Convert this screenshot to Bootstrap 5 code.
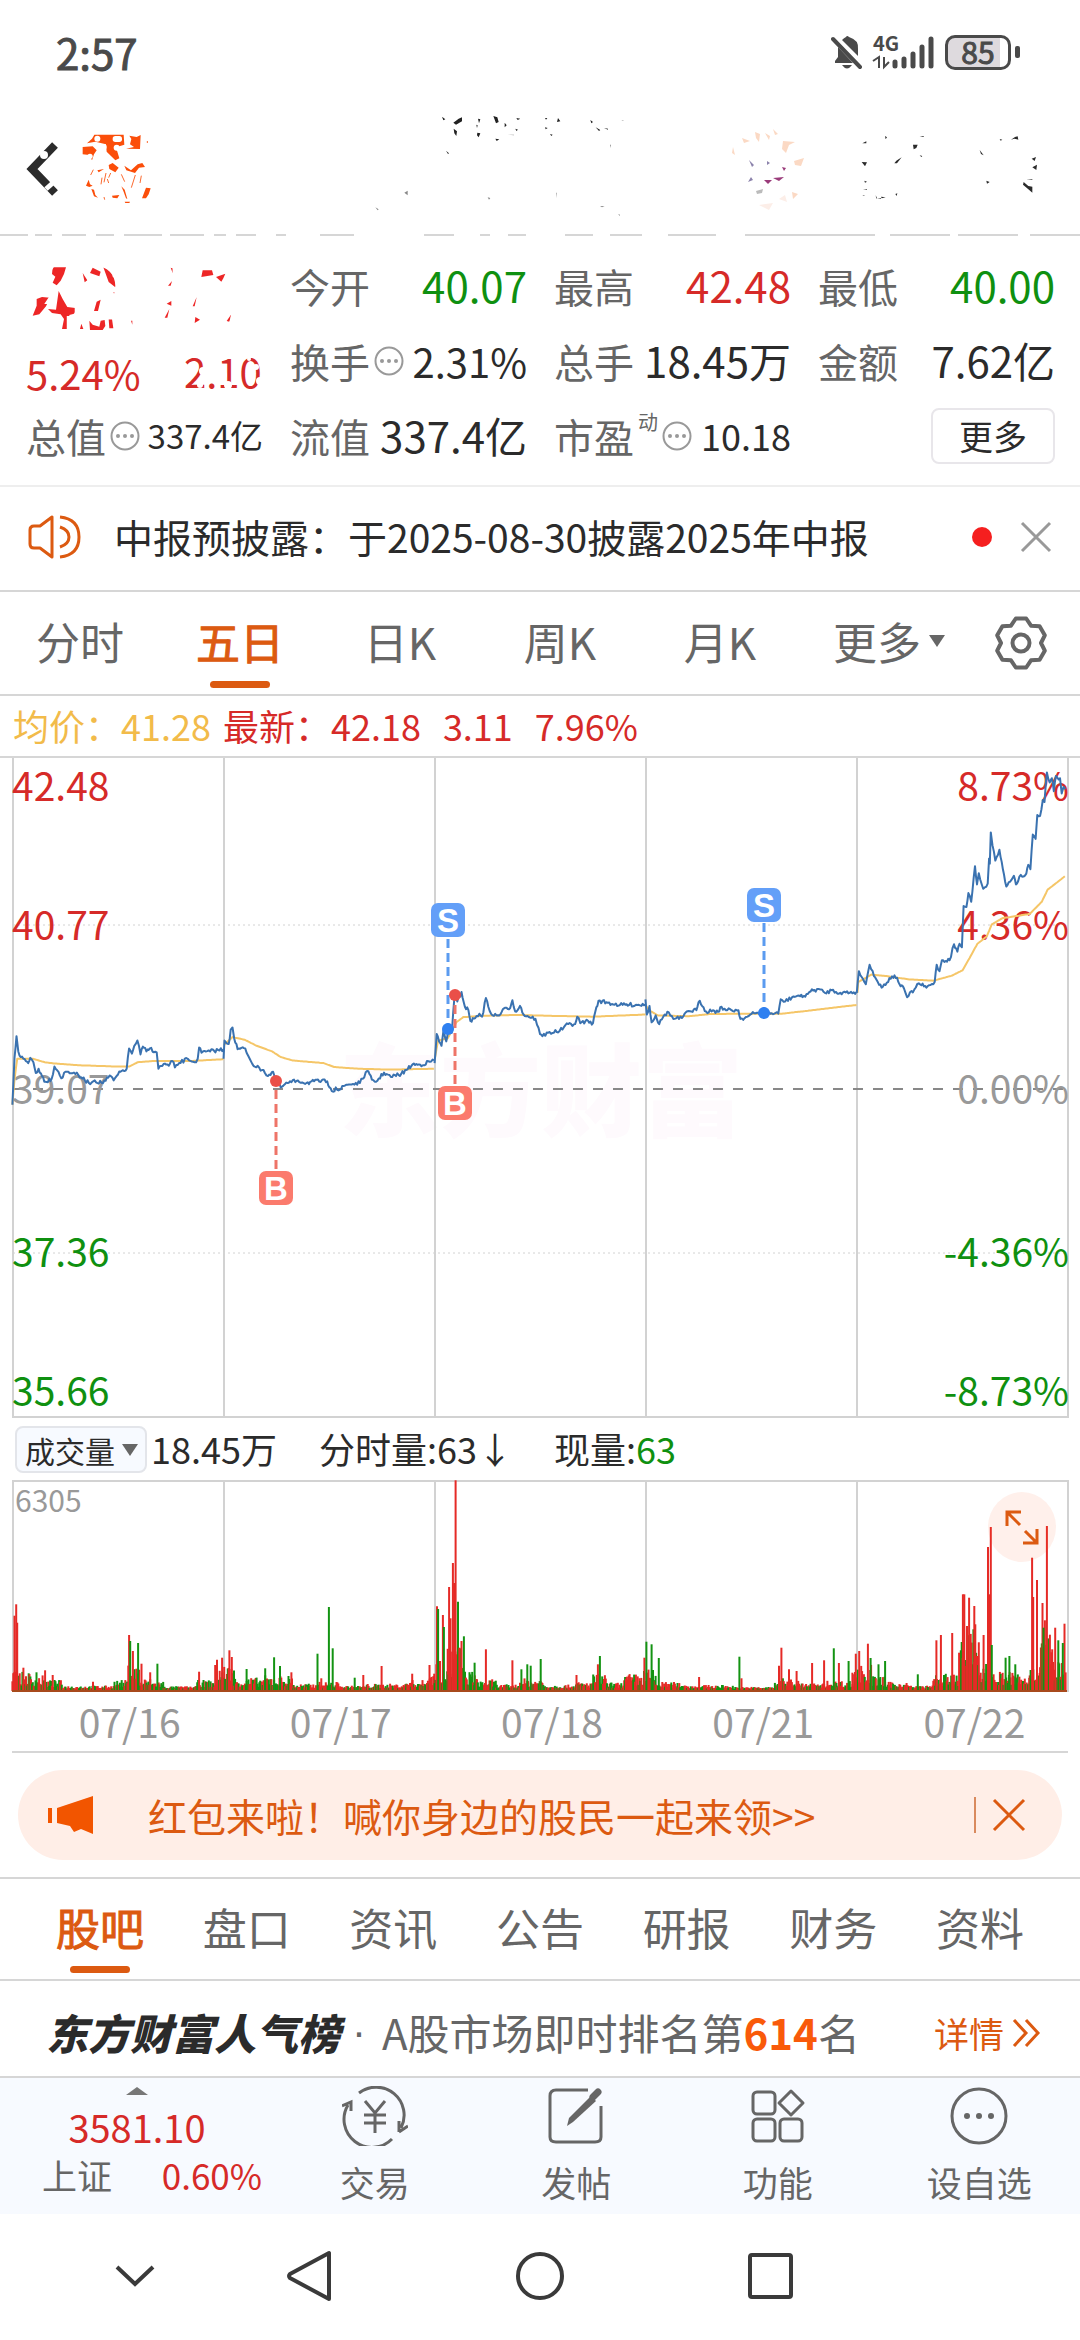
<!DOCTYPE html>
<html lang="zh-CN">
<head>
<meta charset="utf-8">
<meta name="viewport" content="width=device-width, initial-scale=1">
<title>五日行情</title>
<link href="https://cdn.jsdelivr.net/npm/bootstrap@5.3.0/dist/css/bootstrap.min.css" rel="stylesheet">
<style>
:root{--ink:#2b2b2b;--soft:#666;--up:#d62a28;--down:#0f9010;--brand:#dc5a11;--rule:#d6d6d6}
body{font-family:"Noto Sans CJK SC",sans-serif;color:var(--ink);background:#fff;line-height:1.2;font-size:42px}
svg{display:block;flex:none}
button,select{font-family:inherit;color:inherit}
.bare{border:0;background:none;padding:0}
.c-up{color:var(--up)}.c-down{color:var(--down)}.c-brand{color:var(--brand)}.c-soft{color:var(--soft)}
.rule-b{border-bottom:2px solid var(--rule)}
.status{height:104px;padding:0 60px 0 56px;color:#4a4a4a;-webkit-text-stroke:1px currentColor}
.batt{width:66px;height:35px;border:3px solid #4a4a4a;border-radius:10px;background:linear-gradient(90deg,#dedade 86%,#fff 86%);font-size:30px;line-height:27px;text-align:center}
.nub{width:5px;height:12px;border-radius:2px;background:#4a4a4a}
.topbar{height:130px;padding:0 35px 0 24px}
.title-mark{margin-left:208px}
.quotes{display:grid;grid-template-columns:repeat(4,1fr);grid-template-rows:repeat(3,75px);column-gap:27px;padding:12px 25px 12px 26px;border-bottom:2px solid #eee}
.quotes>div{display:flex;align-items:center;justify-content:space-between;white-space:nowrap}
.q-label{font-size:40px;color:var(--soft);display:flex;align-items:center;gap:4px}
.q-sup{font-size:20px;align-self:flex-start;line-height:20px}
.s33{font-size:33px}.s36{font-size:36px}.s40{font-size:40px}
.more-btn{width:124px;height:56px;border:2px solid #e8e6ea;border-radius:8px;background:#fff;font-size:34px;line-height:44px}
.notice{height:105px;padding:0 28px 4px 28px;font-size:39px}
.notice-text{margin-left:32px}
.dot{width:20px;height:20px;border-radius:50%;background:#f51f1f}
.tabs-a{height:104px;font-size:44px}
.tabs-a a,.tabs-b a{color:var(--soft);text-decoration:none;position:relative;height:100%;display:flex;align-items:center;padding-bottom:4px}
.tabs-a a{width:160px;justify-content:center}
.tabs-a a.on,.tabs-b a.on{color:var(--brand);-webkit-text-stroke:1px var(--brand)}
.on::after{content:"";position:absolute;left:50%;bottom:6px;width:60px;margin-left:-30px;height:7px;border-radius:4px;background:var(--brand)}
.tri{width:0;height:0;border:8px solid transparent;border-top:12px solid currentColor;border-bottom:0}
.legend-row{height:62px;padding:0 13px;font-size:36px;gap:22px}
.y-avg{color:#f2bb4a;margin-right:-10px}
.vol-row{height:62px;padding:0 15px;font-size:36px}
.vol-total{width:168px}.vol-minute{width:235px}
.pick{position:relative;width:132px;height:47px}
.pick select{appearance:none;width:100%;height:100%;border:2px solid #e3e5ea;border-radius:8px;background:#f7faff;font-size:30px;line-height:40px;padding:0 0 0 8px}
.pick .tri{position:absolute;right:9px;top:18px;color:#666;pointer-events:none}
.expand{position:absolute;right:24px;top:12px;width:68px;height:70px;border-radius:50%;background:rgba(255,90,30,.09)}
.dates{height:59px;padding-left:24px;font-size:39px;color:#999}
.thin{height:2px;margin:0 12px;background:var(--rule)}
.promo{margin:17px 18px;height:90px;border-radius:45px;background:#ffeee7;padding:0 36px 0 30px;font-size:39px}
.promo a{color:var(--brand);text-decoration:none;margin-left:54px}
.promo i{width:2px;height:36px;background:#d98a5e}
.tabs-b{height:104px;padding:0 56px;font-size:44px;border-top:2px solid var(--rule)}
.rank{height:97px;padding:8px 38px 0 46px;font-size:42px}
.rank-name{font-weight:900;font-style:italic;color:#2b2b2b}
.rank-sep{font-family:"Liberation Sans",sans-serif}
.rank strong{color:#f95a0a}
.rank a{font-size:35px;color:var(--brand);text-decoration:none}
.dock{height:136px;background:#f7faff;font-size:35px;color:var(--soft)}
.dock-index{width:274px;padding:9px 12px 0 42px;gap:4px}
.dock-index b{font-weight:400;font-size:38px;padding:5px 30px 0 0}
.dock-index svg{margin-right:30px}
.dock button{flex:1;padding-top:8px;gap:15px;line-height:42px}
.sysnav{height:123px;padding-left:77px}
.sysnav button{width:231px}
.sysnav button:first-child{width:116px}
.axis text{font-size:39px}
</style>
</head>
<body>
<header>
  <div class="status d-flex align-items-center">
    <span class="me-auto">2:57</span>
    <svg width="32" height="36" viewBox="0 0 32 36" fill="#4a4a4a" stroke="none" aria-hidden="true"><path d="M4 28V27l3-4V13L22 29H4z"/><path d="M11 6Q13 4 15 3Q16 1 18 3Q28 6 27 15V22z"/><path d="M11 31h10q-5 7-10 0z"/><path d="M2 5L29 33" stroke="#4a4a4a" stroke-width="4" stroke-linecap="round"/></svg>
    <svg class="ms-2 me-2" width="66" height="40" viewBox="0 0 66 40" fill="#4a4a4a" aria-hidden="true"><text x="2" y="19" font-size="20" font-weight="700" font-family="Noto Sans CJK SC">4G</text><path d="M2 29l6-4v11M13 25v10l5-5" fill="none" stroke="#4a4a4a" stroke-width="2"/><g stroke="#4a4a4a" stroke-width="5" stroke-linecap="round"><path d="M24 30v4M33 27v7M42 22v12M51 15v19M60 7v27"/></g></svg>
    <span class="batt">85</span><span class="nub ms-1"></span>
  </div>
  <div class="topbar d-flex align-items-center">
    <button class="bare" aria-label="返回"><svg width="40" height="60" viewBox="0 0 40 60"><path d="M31 6L8 30L31 54" fill="none" stroke="#2b2b2b" stroke-width="8"/><circle cx="20" cy="16" r="4" fill="#fff"/><path d="M22 50l9-8" stroke="#fff" stroke-width="5"/></svg></button>
    <svg class="ms-3" width="74" height="72" viewBox="212 40 222 216" fill="#fb4e0a" aria-hidden="true">
      <path d="M255 45h88l2 30-25 8 10 33-12 6-26-26-2-22-32-8-25 5 15-14zM360 48l6 10-4 16 12 8-24 5 42 1 2-42-12 6zM220 82l30-2 12 12-8 12-6 18-8-16-20-2zM298 136l12-6 18 14-10 14-18-10zM345 138l20 14 20-18 14-4 8 12-18 2-12 16-26-8zM230 198l8-18 4 14 8 4-10 4zM246 208l8 2 4 16 8 8-12-4zM398 236l12-32 14 2-6 18-8 12zM264 152l20-4-16 10zM308 228l22-2-6 10-14-2zM346 246l16 0-2 4-12 0zM336 200l10 10 8 28-4-2-8-22z"/>
      <path d="M278 174l-3 20M290 160l-6 28M294 178l4 12M304 160l-6 14M336 164l10 22M378 166l-12 38M252 150l-8 16M396 168l-4 22M284 232l2 8M414 64v6" stroke="#fb6a30" stroke-width="3"/>
      <g fill="#fff"><circle cx="264" cy="57" r="9"/><rect x="310" y="49" width="28" height="18" rx="8"/><circle cx="283" cy="82" r="9"/><circle cx="322" cy="84" r="9"/><circle cx="242" cy="110" r="8"/></g>
    </svg>
    <svg class="title-mark" width="300" height="130" viewBox="0 0 900 390" aria-hidden="true" fill="#222"><path d="M240 38l10 8-6 3zM274 56l16-12 10-4v12l-18 10zM275 74l10 8-2 14-6-8zM348 44l7 2-4 12zM346 86l9 2-5 12-5-6zM343 62l4 2-2 8zM394 36l12 4 4 14-8 4zM428 56l6 8-6 6zM463 42l12 2-8 4zM460 74l8 3-5 4zM400 104l12 2-8 5zM549 42h7l-4 5zM588 42l7 10-10 2zM549 70l8 2-6 4zM564 90l8 2-4 4zM685 48l8 6-5 4zM701 70l14 8-4 3zM726 72l12 2v3zM252 140l9 8-3 2zM736 46l12-3zM703 162l6 2z"/><g fill="#888"><path d="M110 242l8 3zM127 266l10-6v14zM40 310l10 6-3 3zM36 260l6 3zM96 310l6 4zM24 300l4 6zM377 280l8 2-4 5zM583 266h2v16zM714 306l14 1-8 3zM768 330l6 2v4zM722 330l4 5zM518 330l5 5zM244 84l8 6zM276 114l6 6zM440 122l6 4zM744 122h3v10zM416 76l3 16zM438 92h18v2zM480 66l5 6zM64 290l6 4zM94 278l4 8zM130 302l3 3zM750 46h4zM778 48h6v2z"/></g></svg>
    <svg class="ms-auto me-2" width="78" height="88" viewBox="0 0 78 88" aria-hidden="true"><g fill="#fbd9c4"><path d="M28 7l5 2-1 8-3-4zM38 8l5 3-1 4zM56 16l12 1-6 3-3 8-4-4zM67 36l10-3-3 8-6-1zM65 67l6 2-5 5zM15 13l8 3-6 2zM6 22l2 8-3-2zM46 4l5 5-3 1zM70 54l7-2z"/></g><g fill="#fceee8"><path d="M32 80l14-2-4 7zM10 72l6 4zM2 44l2 8zM52 74l6-4 2 7z"/></g><path d="M22 35l5 5-2 2zM40 36l3 2-3 2zM24 52l2 3-5 2z" fill="#8c83ac"/><path d="M37 55l8 0-4 4zM46 53l11-1-5 4zM55 42l4 1-2 3z" fill="#9a3b7a"/><path d="M29 66l7-2-1 4-5 1zM63 53l5 1z" fill="#bbb"/></svg>
    <svg class="ms-5" width="66" height="70" viewBox="282 78 198 210" aria-hidden="true" fill="#2b2b2b"><path d="M286 106l12-6 0 6zM354 84l6 4-4 6zM438 110h14l-4 10-8 4zM382 166l6-8 16-10-14 18zM284 162l16 1-6 12zM292 218l8 3-6 3zM326 262l4 8-2 2zM342 266l14 2-12 3zM385 258l6-2-2 8zM458 84h12v3zM458 142l8 2-3 3zM466 106l4 12zM470 126l4 8zM296 176l6 8zM288 244h12v2zM286 262h6v2zM330 270h12v2z"/></svg>
    <svg class="ms-5" width="70" height="70" viewBox="644 78 210 210" aria-hidden="true" fill="#2b2b2b"><path d="M752 95l12-8 8-2 2 10-12-3zM718 93l8 2-5 3zM658 126l12 16-8-4zM650 166l6 12zM678 218l10 4-8 5zM793 114l10 6zM803 120l4 14zM814 152l13-5-4 12zM816 178l14-8-2 16zM790 222l14 12 12 2v18l-12-10-16-14zM818 256l10 8zM798 213h18v2zM742 260l8-6zM752 242l10-2zM836 260l6 1zM774 100l8 8z"/></svg>
  </div>
  <svg width="100%" height="2" aria-hidden="true"><path d="M0 1H28M35 1H52M62 1h24M96 1h18M124 1h38M170 1h34M214 1h12M236 1h20M276 1h10M320 1h34M424 1h30M480 1h10M508 1h18M565 1h28M610 1h32M668 1h48M745 1h130M890 1h60M958 1h60M1030 1H2000" stroke="#d6d6d6" stroke-width="2"/></svg>
</header>

<section class="quotes">
  <div class="pt-4"><svg width="214" height="66" viewBox="30 438 642 198" role="img" aria-label="最新价 42.18">
    <defs><mask id="worn"><g fill="#fff"><path d="M110 445h40l-6 20-10 20-12 14-12-8 8-18-10-8zM50 590l12-30 0-20 16-6 24 2-12 26-20 24zM96 570l24 2 8-56 12 24 14 24 30 4-10 16-14 4 2 42h-24l6-30-10-14-26-4zM200 462l14 22-8 6zM222 462l8-16 24 12-4 14zM262 445l26 6 2 22 18 12-10 20-20-16zM292 520h14l-10 8zM234 576l8-28 12-6-8 34zM192 630l4-16 6 16zM220 605l10 12 20 6 4-18 12-2 2 18-8 12h-38zM278 600h10l4 28h-12zM345 605h4v12zM464 446l12 4-6 12zM456 500l12-14-4 14zM452 554l14-8 0 14zM446 596l14-26-6 26zM556 474l4-20 14 0 14 0 4 14zM600 474l28-10-6 14-6 10zM530 562l12-28-6 28zM536 612l2-18 14 8zM632 606l14-20-6 22zM624 498l18-4z"/></g></mask></defs>
    <text x="40" y="630" font-size="243" fill="#ed2626" stroke="#ed2626" stroke-width="18" mask="url(#worn)">42.18</text></svg></div>
  <div><span class="q-label">今开</span><span class="c-down">40.07</span></div>
  <div><span class="q-label">最高</span><span class="c-up">42.48</span></div>
  <div><span class="q-label">最低</span><span class="c-down">40.00</span></div>
  <div class="c-up s40 pt-4"><span>5.24%</span><svg width="80" height="48" viewBox="0 0 80 48" role="img" aria-label="2.10"><text x="1" y="39" font-size="40" fill="#d62a28">2.10</text><g fill="#fff"><circle cx="9" cy="17" r="4"/><circle cx="20" cy="22" r="4"/><circle cx="17" cy="36" r="3"/><circle cx="40" cy="26" r="4"/><circle cx="45" cy="36" r="4"/><circle cx="66" cy="10" r="2"/><circle cx="73" cy="18" r="3"/><circle cx="77" cy="32" r="4"/></g></svg></div>
  <div><span class="q-label">换手<svg width="30" height="30" viewBox="0 0 30 30"><circle cx="15" cy="15" r="13.5" fill="none" stroke="#999" stroke-width="2"/><g fill="#999"><circle cx="8" cy="15" r="2"/><circle cx="15" cy="15" r="2"/><circle cx="22" cy="15" r="2"/></g></svg></span><span class="s40">2.31%</span></div>
  <div><span class="q-label">总手</span><span>18.45万</span></div>
  <div><span class="q-label">金额</span><span>7.62亿</span></div>
  <div><span class="q-label">总值<svg width="30" height="30" viewBox="0 0 30 30"><circle cx="15" cy="15" r="13.5" fill="none" stroke="#999" stroke-width="2"/><g fill="#999"><circle cx="8" cy="15" r="2"/><circle cx="15" cy="15" r="2"/><circle cx="22" cy="15" r="2"/></g></svg></span><span class="s33">337.4亿</span></div>
  <div><span class="q-label">流值</span><span>337.4亿</span></div>
  <div><span class="q-label">市盈<span class="q-sup">动</span><svg width="30" height="30" viewBox="0 0 30 30"><circle cx="15" cy="15" r="13.5" fill="none" stroke="#999" stroke-width="2"/><g fill="#999"><circle cx="8" cy="15" r="2"/><circle cx="15" cy="15" r="2"/><circle cx="22" cy="15" r="2"/></g></svg></span><span class="s36">10.18</span></div>
  <div class="justify-content-end"><button class="more-btn">更多</button></div>
</section>

<section class="notice rule-b d-flex align-items-center">
  <svg width="54" height="48" viewBox="0 0 54 48" fill="none" stroke="#dc5a11" stroke-width="3"><path d="M2 17Q2 13 6 13H12L24 4V44L12 35H6Q2 35 2 31z" stroke-linejoin="round"/><path d="M32 14Q41 17 41 24T32 34"/><path d="M32 4Q51 6 51 24T32 44"/></svg>
  <span class="notice-text me-auto text-nowrap">中报预披露：于2025-08-30披露2025年中报</span>
  <span class="dot me-4"></span>
  <button class="bare ms-1" aria-label="关闭"><svg width="32" height="32" viewBox="0 0 32 32"><path d="M2 2L30 30M30 2L2 30" stroke="#999" stroke-width="3"/></svg></button>
</section>

<nav class="tabs-a rule-b d-flex align-items-center">
  <a href="#">分时</a><a href="#" class="on">五日</a><a href="#">日K</a><a href="#">周K</a><a href="#">月K</a><a href="#" class="flex-fill pe-2">更多<span class="tri ms-2"></span></a>
  <button class="bare me-4 px-2" aria-label="设置"><svg width="54" height="54" viewBox="0 0 54 54" fill="none" stroke="#666" stroke-width="4" stroke-linejoin="round"><path d="M21.8 2.5H32.2L37 9.7 45.6 10.3 50.8 19.3 47 27 50.8 34.7 45.6 43.7 37 44.3 32.2 51.5H21.8L17 44.3 8.4 43.7 3.2 34.7 7 27 3.2 19.3 8.4 10.3 17 9.7z"/><circle cx="27" cy="27" r="8.500"/></svg></button>
</nav>

<main>
  <div class="legend-row rule-b d-flex align-items-center text-nowrap"><span class="y-avg">均价：41.28</span><span class="c-up">最新：42.18</span><span class="c-up">3.11</span><span class="c-up">7.96%</span></div>
  <svg id="price" width="100%" viewBox="0 758 1080 660" font-family="Noto Sans CJK SC" role="img" aria-label="五日走势">
    <text x="339" y="1129" font-size="101" font-weight="900" fill="#fefafd">东方财富</text>
    <g stroke="#d2d2d2" stroke-width="2" fill="none"><path d="M13 758V1417H1068V758M224 758V1417M435 758V1417M646 758V1417M857 758V1417"/><path d="M13 925H1068M13 1253H1068" stroke-dasharray="2 3" stroke-width="1"/><path d="M13 1089H1068" stroke="#888" stroke-dasharray="10 10"/></g>
    <g class="axis"><g fill="#d62a28"><text x="12" y="801">42.48</text><text x="12" y="940">40.77</text></g><text x="12" y="1104" fill="#999">39.07</text><g fill="#0f9010"><text x="12" y="1267">37.36</text><text x="12" y="1406">35.66</text></g>
    <g text-anchor="end"><g fill="#d62a28"><text x="1069" y="801">8.73%</text><text x="1069" y="940">4.36%</text></g><text x="1069" y="1104" fill="#999">0.00%</text><g fill="#0f9010"><text x="1069" y="1267">-4.36%</text><text x="1069" y="1406">-8.73%</text></g></g></g>
    <g id="lines" fill="none" stroke-width="2" stroke-linejoin="round"></g>
    <g stroke-width="3" stroke-dasharray="9 5"><path d="M448 939V1030M764 923V1012" stroke="#5b9bf0"/><path d="M455 1084V1000M276 1169V1086" stroke="#ee7468"/></g>
    <g fill="#2f80f0"><circle cx="448" cy="1029" r="6"/><circle cx="764" cy="1013" r="6"/></g><g fill="#ea4f48"><circle cx="455" cy="995" r="6"/><circle cx="276" cy="1081" r="6"/></g>
    <g fill="#639ff8"><rect x="431" y="903" width="34" height="34" rx="7"/><rect x="747" y="888" width="34" height="34" rx="7"/></g><g fill="#fb7b6d"><rect x="438" y="1086" width="34" height="34" rx="7"/><rect x="259" y="1171" width="34" height="34" rx="7"/></g>
    <g fill="#fff" font-family="Liberation Sans" font-weight="700" font-size="33" text-anchor="middle"><text x="448" y="932">S</text><text x="764" y="917">S</text><text x="455" y="1115">B</text><text x="276" y="1200">B</text></g>
  </svg>
  <div class="vol-row d-flex align-items-center text-nowrap">
    <label class="pick"><select aria-label="指标"><option>成交量</option></select><span class="tri"></span></label>
    <span class="ms-1 me-auto d-flex"><span class="vol-total">18.45万</span><span class="vol-minute">分时量:63↓</span><span>现量:<span class="c-down">63</span></span></span>
  </div>
  <div class="position-relative">
    <svg id="volume" width="100%" viewBox="0 1480 1080 212" font-family="Noto Sans CJK SC" role="img" aria-label="成交量">
      <path d="M13 1692V1481H1068V1692M224 1481V1692M435 1481V1692M646 1481V1692M857 1481V1692" fill="none" stroke="#d2d2d2" stroke-width="2"/>
      <text x="15" y="1512" font-size="30" fill="#999">6305</text><g id="bars" stroke-width="2"></g>
    </svg>
    <button class="expand bare d-flex align-items-center justify-content-center" aria-label="全屏"><svg width="34" height="36" viewBox="0 0 34 36" fill="none" stroke="#dc5a11" stroke-width="3"><path d="M2 17V3H16M3 4L15 16M32 20V34H18M31 33L20 22"/></svg></button>
  </div>
  <div class="dates d-flex align-items-center text-center"><span class="flex-fill">07/16</span><span class="flex-fill">07/17</span><span class="flex-fill">07/18</span><span class="flex-fill">07/21</span><span class="flex-fill">07/22</span></div>
  <div class="thin"></div>
  <div class="promo d-flex align-items-center">
    <svg width="46" height="40" viewBox="0 0 46 40" fill="#f25500"><path d="M0 13h4v15H0zM9 13L45 1V39L33 34l-7 3-4-6-13-3z"/></svg>
    <a href="#" class="me-auto text-nowrap">红包来啦！喊你身边的股民一起来领&gt;&gt;</a>
    <i class="me-3"></i><button class="bare" aria-label="关闭提示"><svg width="34" height="34" viewBox="0 0 34 34"><path d="M2 2L32 32M32 2L2 32" stroke="#dc5a11" stroke-width="3"/></svg></button>
  </div>
  <nav class="tabs-b rule-b d-flex justify-content-between align-items-center"><a href="#" class="on">股吧</a><a href="#">盘口</a><a href="#">资讯</a><a href="#">公告</a><a href="#">研报</a><a href="#">财务</a><a href="#">资料</a></nav>
  <div class="rank rule-b d-flex align-items-center text-nowrap"><span class="rank-name">东方财富人气榜</span><span class="rank-sep c-soft ms-2 ps-1">·</span><span class="c-soft ms-3 me-auto">A股市场即时排名第<strong>614</strong>名</span><a href="#" class="d-flex align-items-center gap-2">详情<svg width="30" height="30" viewBox="0 0 30 30" fill="none" stroke="#dc5a11" stroke-width="3"><path d="M2 2L14 15L2 28M14 2L26 15L14 28"/></svg></a></div>
</main>

<footer>
  <div class="dock d-flex">
    <div class="dock-index d-flex flex-column"><svg class="align-self-center" width="22" height="8" viewBox="0 0 22 8"><path d="M0 8L11 0L22 8z" fill="#777"/></svg><b class="c-up text-center">3581.10</b><div class="d-flex justify-content-between"><span>上证</span><span class="c-up">0.60%</span></div></div>
    <button class="bare d-flex flex-column align-items-center"><svg width="66" height="60" viewBox="0 0 66 60" fill="none" stroke="#666" stroke-width="3"><path d="M17 7A28 28 0 0 1 59 42M50 53A28 28 0 0 1 6 19M0 20L9 16V25M57 46V35M57 46L66 40"/><path d="M23 15L33 27L43 15M33 27V47M22 29H44M22 37H44"/></svg>交易</button>
    <button class="bare d-flex flex-column align-items-center"><svg width="60" height="60" viewBox="0 0 60 60" fill="none" stroke="#666" stroke-width="3"><path d="M42 4H10Q4 4 4 10V51Q4 56 10 56H49Q55 56 55 51V20"/><path d="M47 11L52 6" stroke-width="7" stroke-linecap="round"/><path d="M21 40L23 32L45 10L50 15L27 36z" fill="#666" stroke="none"/></svg>发帖</button>
    <button class="bare d-flex flex-column align-items-center"><svg width="60" height="60" viewBox="0 0 60 60" fill="none" stroke="#666" stroke-width="3"><rect x="5" y="6" width="22" height="22" rx="4"/><rect x="5" y="33" width="22" height="22" rx="4"/><rect x="32" y="33" width="22" height="22" rx="4"/><path d="M43 5L55 17L43 29L31 17z" stroke-linejoin="round"/></svg>功能</button>
    <button class="bare d-flex flex-column align-items-center"><svg width="60" height="60" viewBox="0 0 60 60" fill="none" stroke="#666" stroke-width="3"><circle cx="30" cy="30" r="27"/><g fill="#666" stroke="none"><circle cx="18" cy="30" r="3"/><circle cx="30" cy="30" r="3"/><circle cx="42" cy="30" r="3"/></g></svg>设自选</button>
  </div>
  <div class="sysnav d-flex align-items-center">
    <button class="bare d-flex justify-content-center" aria-label="收起"><svg width="42" height="50" viewBox="0 0 42 50" fill="none" stroke="#3a3a3a" stroke-width="4"><path d="M3 16L21 33L39 16"/></svg></button>
    <button class="bare d-flex justify-content-center" aria-label="后退"><svg width="46" height="52" viewBox="0 0 46 52" fill="none" stroke="#3a3a3a" stroke-width="4" stroke-linejoin="round"><path d="M43 3V49L4 28Q2 26 4 24z"/></svg></button>
    <button class="bare d-flex justify-content-center" aria-label="主页"><svg width="50" height="50" viewBox="0 0 50 50" fill="none" stroke="#3a3a3a" stroke-width="4"><circle cx="25" cy="25" r="22"/></svg></button>
    <button class="bare d-flex justify-content-center" aria-label="多任务"><svg width="50" height="50" viewBox="0 0 50 50" fill="none" stroke="#3a3a3a" stroke-width="4"><rect x="4" y="4" width="41" height="42" rx="2"/></svg></button>
  </div>
</footer>
<script src="https://cdn.jsdelivr.net/npm/bootstrap@5.3.0/dist/js/bootstrap.bundle.min.js"></script>
<script>
let seed = 7;
const rnd = () => (seed = (seed * 16807) % 2147483647) / 2147483647;
const NS = 'http://www.w3.org/2000/svg';
// Chart samples are stored on a 3136 x 1568 grid that spans the price pane.
const px = x => x / 2.9037, py = y => 750 + y / 2.306;
function draw(points, color, jitter) {
  const out = [];
  for (let i = 0; i < points.length - 1; i++) {
    const [x0, y0] = points[i], [x1, y1] = points[i + 1];
    const n = Math.max(1, Math.round((x1 - x0) / 4));
    for (let k = 0; k < n; k++) {
      const j = k ? (rnd() - .5) * jitter : 0;
      out.push(px(x0 + (x1 - x0) * k / n).toFixed(1) + ',' + py(y0 + (y1 - y0) * k / n + j).toFixed(1));
    }
  }
  const last = points[points.length - 1];
  out.push(px(last[0]).toFixed(1) + ',' + py(last[1]).toFixed(1));
  const el = document.createElementNS(NS, 'polyline');
  el.setAttribute('points', out.join(' '));
  el.setAttribute('stroke', color);
  document.getElementById('lines').appendChild(el);
}
const avg = [
 [[36,818],[42,760],[50,712],[95,712],[130,720],[160,723],[230,727],[340,730],[375,730],[400,720],[450,717],[560,717],[649,713]],
 [[650,680],[675,662],[710,668],[745,682],[790,695],[815,708],[850,716],[940,722],[970,731],[1040,735],[1130,737],[1260,735]],
 [[1263,710],[1272,670],[1300,665],[1325,628],[1345,616],[1400,613],[1500,611],[1600,613],[1720,615],[1874,610]],
 [[1876,590],[1885,600],[1910,612],[2000,614],[2060,609],[2150,608],[2270,608],[2350,601],[2487,588]],
 [[2490,560],[2492,535],[2530,518],[2570,521],[2640,529],[2710,532],[2765,520],[2795,508],[2815,480],[2838,447],[2865,430],[2880,402],[2910,388],[2990,378],[3025,350],[3042,322],[3070,305],[3092,291]]];
avg.forEach(p => draw(p, '#f5c668', 0));
const price = [
 [[36,818],[42,710],[48,660],[53,695],[60,708],[68,712],[82,722],[88,710],[97,720],[104,745],[112,735],[122,752],[132,765],[150,758],[158,730],[170,742],[178,757],[190,742],[215,744],[235,755],[258,768],[275,762],[295,768],[322,752],[330,762],[350,742],[368,735],[375,688],[383,700],[390,682],[399,670],[408,702],[415,684],[425,695],[435,688],[455,697],[460,735],[475,724],[490,728],[500,717],[508,732],[520,722],[545,712],[565,720],[574,712],[578,686],[585,698],[610,695],[649,690]],
 [[649,712],[652,670],[664,678],[670,645],[675,640],[680,665],[690,690],[712,688],[725,712],[740,730],[765,738],[778,752],[793,742],[801,762],[815,778],[835,768],[865,762],[890,768],[912,764],[950,764],[960,780],[967,788],[975,778],[983,785],[1005,772],[1045,768],[1066,740],[1080,760],[1092,765],[1115,744],[1135,754],[1165,747],[1180,738],[1198,725],[1220,726],[1260,716]],
 [[1262,722],[1268,655],[1275,672],[1282,682],[1288,645],[1296,672],[1304,640],[1312,652],[1320,565],[1328,580],[1340,558],[1350,592],[1360,600],[1366,625],[1380,618],[1392,608],[1400,615],[1411,572],[1418,592],[1430,612],[1450,612],[1460,598],[1478,598],[1488,577],[1496,603],[1510,590],[1520,610],[1555,620],[1568,655],[1575,660],[1592,652],[1625,648],[1650,632],[1670,632],[1676,615],[1685,630],[1700,625],[1722,630],[1728,605],[1738,578],[1765,583],[1800,588],[1874,587]],
 [[1874,575],[1878,610],[1886,590],[1892,628],[1904,612],[1914,632],[1930,610],[1942,605],[1955,620],[1980,618],[2000,602],[2022,600],[2032,578],[2050,603],[2070,600],[2085,604],[2095,592],[2108,600],[2144,600],[2150,620],[2170,615],[2190,607],[2218,607],[2260,608],[2267,575],[2280,580],[2300,570],[2320,566],[2330,570],[2350,558],[2376,551],[2395,560],[2415,554],[2440,560],[2487,558]],
 [[2488,560],[2494,510],[2506,528],[2514,540],[2525,495],[2534,510],[2545,530],[2560,548],[2590,522],[2605,525],[2615,545],[2625,550],[2634,570],[2655,552],[2668,538],[2690,548],[2714,535],[2720,495],[2728,510],[2735,485],[2757,485],[2770,448],[2780,465],[2786,447],[2793,455],[2798,360],[2806,362],[2812,330],[2820,350],[2831,268],[2837,310],[2842,284],[2855,320],[2868,308],[2872,250],[2874,262],[2877,190],[2882,220],[2890,255],[2902,230],[2912,275],[2922,315],[2944,290],[2950,310],[2960,292],[2980,285],[2986,265],[2992,275],[2999,195],[3007,205],[3012,150],[3020,152],[3028,115],[3033,120],[3040,52],[3048,75],[3054,65],[3060,95],[3066,60],[3074,68],[3078,65],[3083,100],[3088,85],[3094,90]]];
price.forEach(p => draw(p, '#3a72b0', 9));

// Volume: [from, to, typical height] envelopes plus single-minute peaks.
const env = [[36,52,120],[52,90,55],[90,130,45],[130,180,30],[180,330,12],[330,370,30],[370,405,80],[405,440,35],[440,475,28],[475,570,10],[570,625,30],[625,680,80],[680,770,38],[770,850,45],[850,920,18],[920,985,24],[985,1060,12],[1060,1180,18],[1180,1240,30],[1240,1262,60],[1262,1300,90],[1300,1345,140],[1345,1385,60],[1385,1440,32],[1440,1510,16],[1510,1580,35],[1580,1670,15],[1670,1720,24],[1720,1760,50],[1760,1810,22],[1810,1870,50],[1870,1905,65],[1905,1990,24],[1990,2130,14],[2130,2250,8],[2250,2320,35],[2320,2400,20],[2400,2480,28],[2480,2530,80],[2530,2570,44],[2570,2640,24],[2640,2710,12],[2710,2790,50],[2790,2840,190],[2840,2880,90],[2880,2960,58],[2960,2990,44],[2990,3020,110],[3020,3050,180],[3050,3096,130]];
const peaks = [[42,226,1],[47,260,1],[50,205,1],[68,70,1],[106,56,0],[131,62,1],[153,48,1],[270,28,1],[375,168,1],[378,150,0],[386,120,1],[401,144,0],[411,82,1],[436,56,1],[457,82,0],[578,58,1],[630,94,1],[645,100,1],[666,122,1],[673,102,1],[716,66,0],[770,68,0],[796,101,0],[813,75,0],[846,56,1],[922,112,0],[955,252,0],[966,128,0],[933,38,1],[1030,40,0],[1055,48,1],[1108,75,1],[1197,52,1],[1247,78,1],[1269,254,1],[1272,246,0],[1286,228,1],[1289,192,0],[1304,312,1],[1308,218,1],[1315,384,1],[1319,324,1],[1323,632,1],[1330,268,0],[1334,130,1],[1347,164,0],[1340,150,1],[1378,85,0],[1411,125,1],[1488,92,1],[1514,65,0],[1531,80,0],[1541,76,0],[1570,96,0],[1674,48,1],[1736,80,1],[1742,105,0],[1871,100,1],[1877,148,0],[1892,140,0],[1913,99,0],[2030,42,1],[2147,103,0],[2153,38,1],[2262,76,1],[2269,130,1],[2291,65,1],[2313,60,1],[2358,84,1],[2393,92,1],[2421,128,0],[2436,84,1],[2464,90,0],[2475,55,1],[2485,112,1],[2495,120,1],[2520,142,1],[2528,99,0],[2551,80,0],[2570,90,0],[2665,50,0],[2719,152,1],[2732,168,1],[2765,174,1],[2785,115,1],[2796,290,1],[2800,290,1],[2808,195,1],[2814,280,1],[2829,255,1],[2832,200,1],[2842,146,1],[2856,168,1],[2869,432,1],[2873,290,1],[2877,492,1],[2880,138,0],[2920,100,0],[2931,105,0],[2948,80,0],[2997,400,1],[3000,282,1],[3011,333,1],[3027,264,1],[3034,212,1],[3030,190,0],[3040,495,1],[3064,190,1],[3073,152,0],[3091,202,1],[3086,144,0]];
const bars = document.getElementById('bars');
function bar(x, h, up) {
  const el = document.createElementNS(NS, 'path');
  el.setAttribute('d', `M${px(x).toFixed(1)} 1691v${(-h / 3).toFixed(1)}`);
  el.setAttribute('stroke', up ? '#e52a26' : '#139312');
  bars.appendChild(el);
}
env.forEach(([a, b, h]) => { for (let x = a; x < b; x += 2.6) bar(x, 5 + h * (.2 + .75 * Math.pow(rnd(), 1.4)), x < 52 || rnd() < .58); });
peaks.forEach(p => bar(...p));
const base = document.createElementNS(NS, 'path');
base.setAttribute('d', 'M12 1691H1067');
base.setAttribute('stroke', '#a84a1c');
bars.appendChild(base);
</script>
</body>
</html>
